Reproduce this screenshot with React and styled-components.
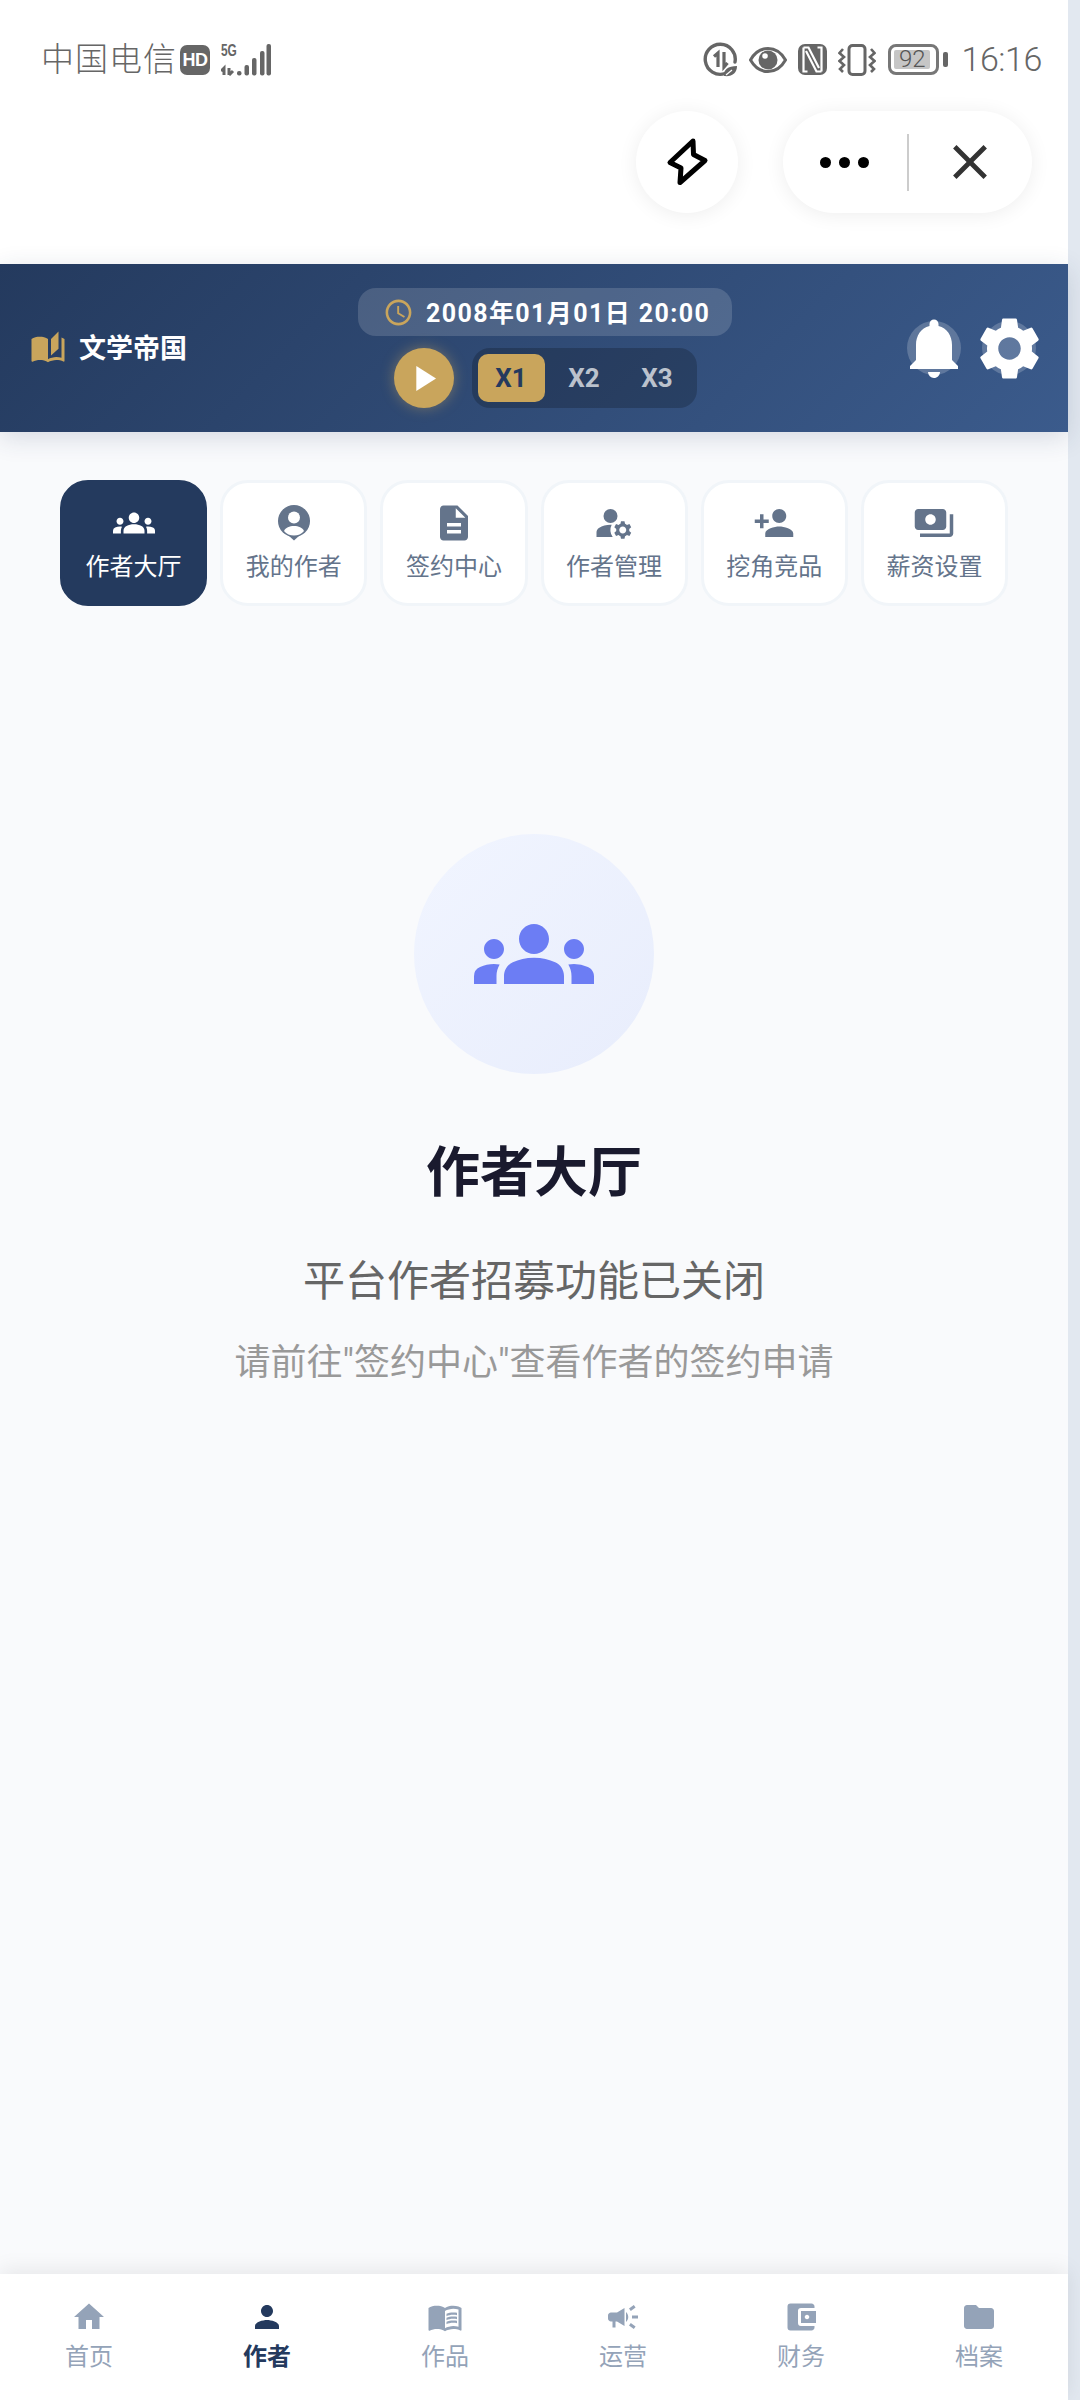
import React from "react";
import styled, { createGlobalStyle } from "styled-components";
import {
  MdGroups,
  MdDescription,
  MdManageAccounts,
  MdPersonAdd,
  MdPayments,
  MdHome,
  MdPerson,
  MdMenuBook,
  MdCampaign,
  MdAccountBalanceWallet,
  MdFolder,
  MdAutoStories,
  MdAccessTime,
  MdNotifications,
  MdSettings,
  MdPlayArrow,
  MdClose,
} from "react-icons/md";

const GlobalStyle = createGlobalStyle`
  html, body {
    margin: 0;
    padding: 0;
    background: #fff;
    overflow: hidden;
  }
  * {
    box-sizing: border-box;
  }
`;

const FONT = `Roboto, "Noto Sans CJK SC", sans-serif`;

const Screen = styled.div`
  display: flex;
  width: 1080px;
  height: 2400px;
  font-family: ${FONT};
`;

const Page = styled.div`
  flex: 1;
  display: flex;
  flex-direction: column;
  min-width: 0;
  background: #f9fafc;
`;

const ScrollGutter = styled.div`
  width: 12px;
  background: #e2e8f0;
`;

const TopArea = styled.div`
  background: #fff;
  height: 264px;
`;

const StatusBar = styled.div`
  height: 111px;
  padding: 42px 26px 0 41px;
  display: flex;
  justify-content: space-between;
  align-items: flex-start;
  color: #666;
`;

const StatusGroup = styled.div`
  display: flex;
  align-items: center;
  height: 35px;
`;

const Carrier = styled.span`
  font-size: 33px;
  font-weight: 300;
  line-height: 35px;
  letter-spacing: 1px;
  color: #666;
`;

const HdBadge = styled.span`
  width: 30px;
  height: 30px;
  margin-left: 3px;
  border-radius: 7px;
  background: #666;
  color: #fff;
  font: 700 18px/30px "Liberation Sans", sans-serif;
  text-align: center;
  letter-spacing: -0.5px;
`;

const SignalWrap = styled.div`
  position: relative;
  width: 50px;
  height: 32px;
  margin-left: 11px;
`;

const FiveG = styled.span`
  position: absolute;
  left: 0;
  top: -2px;
  font: 700 17px/17px "Liberation Sans", sans-serif;
  color: #666;
  transform: scaleX(0.7);
  transform-origin: left center;
`;

const StatusIcon = styled.svg`
  display: block;
  flex: none;
  margin-left: ${(p) => p.$gap || 0}px;
`;

const Battery = styled.div`
  position: relative;
  width: 51px;
  height: 31px;
  margin-left: 12px;
  border: 3px solid #777;
  border-radius: 8px;
  padding: 3px;
  &::after {
    content: "";
    position: absolute;
    right: -12px;
    top: 5px;
    width: 5px;
    height: 15px;
    border-radius: 2px;
    background: #666;
  }
`;

const BatteryLevel = styled.div`
  height: 100%;
  width: 92%;
  border-radius: 2px;
  background: #c6c6c6;
  color: #555;
  font-size: 24px;
  font-weight: 300;
  line-height: 19px;
  text-align: center;
`;

const Clock = styled.span`
  margin-left: 22px;
  font-size: 34px;
  font-weight: 300;
  line-height: 35px;
  letter-spacing: -0.4px;
  color: #666;
`;

const CapsuleRow = styled.div`
  height: 102px;
  padding-right: 36px;
  display: flex;
  justify-content: flex-end;
  gap: 45px;
`;

const FlashButton = styled.div`
  width: 102px;
  height: 102px;
  border-radius: 50%;
  background: #fff;
  box-shadow: 0 2px 20px rgba(0, 0, 0, 0.07);
  display: flex;
  align-items: center;
  justify-content: center;
`;

const Capsule = styled.div`
  width: 249px;
  height: 102px;
  border-radius: 51px;
  background: #fff;
  box-shadow: 0 2px 20px rgba(0, 0, 0, 0.07);
  display: flex;
  align-items: center;
`;

const CapsuleSide = styled.div`
  flex: 1;
  display: flex;
  align-items: center;
  justify-content: center;
  gap: 8px;
  color: #333;
`;

const Dot = styled.span`
  width: 11px;
  height: 11px;
  border-radius: 50%;
  background: #000;
`;

const CapsuleDivider = styled.div`
  width: 2px;
  height: 57px;
  background: #ccc;
`;

const Header = styled.header`
  position: relative;
  z-index: 1;
  height: 168px;
  padding: 0 29px 0 30px;
  display: flex;
  align-items: center;
  justify-content: space-between;
  background: linear-gradient(135deg, #243a5e 0%, #3b5b8c 100%);
  box-shadow: 0 6px 24px rgba(36, 58, 94, 0.16);
`;

const Brand = styled.div`
  display: flex;
  align-items: center;
  gap: 13px;
  color: #c9a55c;
`;

const BrandName = styled.span`
  padding-bottom: 3px;
  font-size: 27px;
  font-weight: 700;
  color: #fff;
`;

const GameControls = styled.div`
  margin-right: 4px;
  display: flex;
  flex-direction: column;
  align-items: center;
  gap: 12px;
`;

const TimePill = styled.div`
  width: 374px;
  height: 48px;
  padding-left: 25px;
  border-radius: 18px;
  background: rgba(255, 255, 255, 0.15);
  display: flex;
  align-items: center;
  gap: 12px;
  color: #c9a55c;
`;

const TimeText = styled.span`
  padding-bottom: 2px;
  font-size: 25px;
  font-weight: 700;
  letter-spacing: 1.4px;
  color: #fff;
`;

const SpeedRow = styled.div`
  display: flex;
  align-items: center;
  gap: 18px;
`;

const PlayButton = styled.div`
  width: 60px;
  height: 60px;
  border-radius: 50%;
  background: #c9a55c;
  box-shadow: 0 0 14px rgba(201, 165, 92, 0.45);
  display: flex;
  align-items: center;
  justify-content: center;
  color: #fff;
`;

const SpeedGroup = styled.div`
  height: 60px;
  padding: 6px;
  border-radius: 18px;
  background: rgba(0, 0, 0, 0.2);
  display: flex;
  gap: 6px;
`;

const SpeedButton = styled.div`
  width: 67px;
  height: 48px;
  border-radius: 10px;
  background: ${(p) => (p.$active ? "#c9a55c" : "transparent")};
  color: ${(p) => (p.$active ? "#243a5e" : "rgba(255, 255, 255, 0.7)")};
  font-size: 26px;
  font-weight: 700;
  line-height: 48px;
  text-align: center;
`;

const HeaderActions = styled.div`
  display: flex;
  align-items: center;
  gap: 18px;
  color: #fff;
`;

const RoundAction = styled.div`
  position: relative;
  width: ${(p) => p.$size}px;
  height: 54px;
  display: flex;
  align-items: center;
  justify-content: center;
  &::before {
    content: "";
    position: absolute;
    left: 50%;
    top: 0;
    width: 54px;
    height: 54px;
    margin-left: -27px;
    border-radius: 50%;
    background: rgba(255, 255, 255, 0.2);
  }
  svg {
    position: relative;
    flex: none;
  }
`;

const TabRow = styled.nav`
  padding: 48px 60px 0;
  display: grid;
  grid-template-columns: repeat(6, 1fr);
  gap: 13px;
`;

const Tab = styled.div`
  height: 126px;
  border: 3px solid ${(p) => (p.$active ? "#243a5e" : "#f1f5f9")};
  border-radius: 28px;
  background: ${(p) => (p.$active ? "#243a5e" : "#fff")};
  color: ${(p) => (p.$active ? "#fff" : "#64748b")};
  display: flex;
  flex-direction: column;
  align-items: center;
  justify-content: center;
  gap: 6px;
`;

const TabLabel = styled.span`
  font-size: 24px;
  line-height: 34px;
  white-space: nowrap;
`;

const EmptyState = styled.main`
  flex: 1;
  padding-top: 228px;
  display: flex;
  flex-direction: column;
  align-items: center;
`;

const EmptyCircle = styled.div`
  width: 240px;
  height: 240px;
  border-radius: 50%;
  background: linear-gradient(135deg, #f1f5ff 0%, #e8edfc 100%);
  display: flex;
  align-items: center;
  justify-content: center;
  color: #6c7df4;
`;

const EmptyTitle = styled.h2`
  margin: 65px 0 0;
  font-size: 54px;
  font-weight: 700;
  line-height: 70px;
  color: #1a1a2e;
`;

const EmptyText = styled.p`
  margin: 46px 0 0;
  font-size: 42px;
  font-weight: 400;
  line-height: 54px;
  color: #666;
`;

const EmptyHint = styled.p`
  margin: 30px 0 0;
  font-size: 36px;
  line-height: 48px;
  color: #999;
`;

const BottomNav = styled.nav`
  position: relative;
  height: 126px;
  background: #fff;
  box-shadow: 0 -4px 20px rgba(0, 0, 0, 0.08);
  display: grid;
  grid-template-columns: repeat(6, 1fr);
`;

const NavItem = styled.div`
  padding-top: 25px;
  display: flex;
  flex-direction: column;
  align-items: center;
  gap: 5px;
  color: ${(p) => (p.$active ? "#243a5e" : "#94a3b8")};
`;

const NavLabel = styled.span`
  font-size: 24px;
  line-height: 34px;
  font-weight: ${(p) => (p.$active ? 700 : 400)};
`;

function SignalBars() {
  return (
    <svg width="50" height="32" viewBox="0 0 50 32" style={{ display: "block" }}>
      <path
        d="M3 31v-7l-3 3M8 24v7M8 31l4-4M8 24v3"
        stroke="#666"
        strokeWidth="3"
        fill="none"
      />
      <g fill="#666">
        <rect x="16" y="27" width="4.500" height="4.500" rx="2" />
        <rect x="23.500" y="21" width="4.500" height="10.500" rx="2" />
        <rect x="31" y="14" width="4.500" height="17.500" rx="2" />
        <rect x="39" y="7" width="4.500" height="24.500" rx="2" />
        <rect x="45.500" y="0" width="4.500" height="31.500" rx="2" />
      </g>
    </svg>
  );
}

function DataSaverIcon() {
  return (
    <StatusIcon width="35" height="35" viewBox="0 0 35 35" fill="none">
      <path
        d="M22 31.500A15 15 0 1 1 32 20"
        stroke="#666"
        strokeWidth="3.400"
        strokeLinecap="round"
      />
      <path d="M15 25V11l-4 3.500" stroke="#666" strokeWidth="3.200" />
      <path d="M21 10v15l3.500-4" stroke="#666" strokeWidth="3.200" />
      <path d="M21 34c-1-6 4-10 13-10 0 7-5 11-13 10z" fill="#666" />
      <path d="M23 33l6-5" stroke="#fff" strokeWidth="1.200" />
    </StatusIcon>
  );
}

function EyeIcon() {
  return (
    <StatusIcon $gap={11} width="38" height="26" viewBox="0 0 38 26" fill="none">
      <path d="M1.500 13C6 5 12 1.500 19 1.500S32 5 36.500 13C32 21 26 24.500 19 24.500S6 21 1.500 13z" stroke="#666" strokeWidth="3" />
      <circle cx="19" cy="13" r="9.500" fill="#666" />
      <circle cx="16" cy="9" r="2.800" fill="#fff" />
    </StatusIcon>
  );
}

function NfcIcon() {
  return (
    <StatusIcon $gap={11} width="29" height="31" viewBox="0 0 29 31" fill="none">
      <rect width="29" height="31" rx="7" fill="#666" />
      <path d="M5.500 3.500h5L21 24M23.500 27.500h-5L8 7" stroke="#fff" strokeWidth="2.200" />
      <path d="M5.500 3.500v24h4M23.500 27.500v-24h-4" stroke="#fff" strokeWidth="2.200" />
    </StatusIcon>
  );
}

function VibrateIcon() {
  return (
    <StatusIcon $gap={11} width="38" height="32" viewBox="0 0 38 32" fill="none">
      <rect x="11" y="1.500" width="16" height="29" rx="3.500" stroke="#666" strokeWidth="3" />
      <path d="M5 5L1.500 9 6 13l-4.500 4L6 21l-4 4 3 3" stroke="#666" strokeWidth="2.600" />
      <path d="M33 5l3.500 4L32 13l4.500 4L32 21l4 4-3 3" stroke="#666" strokeWidth="2.600" />
    </StatusIcon>
  );
}

function PersonPinIcon() {
  return (
    <svg width="42" height="42" viewBox="-5 -3 42 42">
      <circle cx="16" cy="16" r="16" fill="currentColor" />
      <path d="M10 30h12l-6 5.500z" fill="currentColor" />
      <circle cx="16" cy="12.500" r="6" fill="#fff" />
      <path d="M6 26c1.500-3.500 5.500-5 10-5s8.500 1.500 10 5c-2.500 3-6 4.500-10 4.500S8.500 29 6 26z" fill="#fff" />
    </svg>
  );
}

function FlashIcon() {
  return (
    <svg width="47" height="52" viewBox="0 0 47 52" fill="none">
      <path
        d="M29 5L6 26.500L17 32L16 46.500L41 24.500L29.500 18.500Z"
        stroke="#000"
        strokeWidth="5"
        strokeLinejoin="round"
      />
    </svg>
  );
}

const tabs = [
  { label: "作者大厅", icon: <MdGroups size={42} />, active: true },
  { label: "我的作者", icon: <PersonPinIcon /> },
  { label: "签约中心", icon: <MdDescription size={42} /> },
  { label: "作者管理", icon: <MdManageAccounts size={42} /> },
  { label: "挖角竞品", icon: <MdPersonAdd size={42} /> },
  { label: "薪资设置", icon: <MdPayments size={42} /> },
];

const navItems = [
  { label: "首页", icon: MdHome },
  { label: "作者", icon: MdPerson, active: true },
  { label: "作品", icon: MdMenuBook },
  { label: "运营", icon: MdCampaign },
  { label: "财务", icon: MdAccountBalanceWallet },
  { label: "档案", icon: MdFolder },
];

export default function App() {
  return (
    <Screen>
      <GlobalStyle />
      <Page>
        <TopArea>
          <StatusBar>
            <StatusGroup>
              <Carrier>中国电信</Carrier>
              <HdBadge>HD</HdBadge>
              <SignalWrap>
                <FiveG>5G</FiveG>
                <SignalBars />
              </SignalWrap>
            </StatusGroup>
            <StatusGroup>
              <DataSaverIcon />
              <EyeIcon />
              <NfcIcon />
              <VibrateIcon />
              <Battery>
                <BatteryLevel>92</BatteryLevel>
              </Battery>
              <Clock>16:16</Clock>
            </StatusGroup>
          </StatusBar>
          <CapsuleRow>
            <FlashButton>
              <FlashIcon />
            </FlashButton>
            <Capsule>
              <CapsuleSide>
                <Dot />
                <Dot />
                <Dot />
              </CapsuleSide>
              <CapsuleDivider />
              <CapsuleSide>
                <MdClose size={58} />
              </CapsuleSide>
            </Capsule>
          </CapsuleRow>
        </TopArea>

        <Header>
          <Brand>
            <MdAutoStories size={36} />
            <BrandName>文学帝国</BrandName>
          </Brand>
          <GameControls>
            <TimePill>
              <MdAccessTime size={31} />
              <TimeText>2008年01月01日 20:00</TimeText>
            </TimePill>
            <SpeedRow>
              <PlayButton>
                <MdPlayArrow size={43} />
              </PlayButton>
              <SpeedGroup>
                <SpeedButton $active>X1</SpeedButton>
                <SpeedButton>X2</SpeedButton>
                <SpeedButton>X3</SpeedButton>
              </SpeedGroup>
            </SpeedRow>
          </GameControls>
          <HeaderActions>
            <RoundAction $size={54}>
              <MdNotifications size={72} />
            </RoundAction>
            <RoundAction $size={60}>
              <MdSettings size={75} />
            </RoundAction>
          </HeaderActions>
        </Header>

        <TabRow>
          {tabs.map((tab) => (
            <Tab key={tab.label} $active={tab.active}>
              {tab.icon}
              <TabLabel>{tab.label}</TabLabel>
            </Tab>
          ))}
        </TabRow>

        <EmptyState>
          <EmptyCircle>
            <MdGroups size={120} />
          </EmptyCircle>
          <EmptyTitle>作者大厅</EmptyTitle>
          <EmptyText>平台作者招募功能已关闭</EmptyText>
          <EmptyHint>请前往"签约中心"查看作者的签约申请</EmptyHint>
        </EmptyState>

        <BottomNav>
          {navItems.map(({ label, icon: Icon, active }) => (
            <NavItem key={label} $active={active}>
              <Icon size={36} />
              <NavLabel $active={active}>{label}</NavLabel>
            </NavItem>
          ))}
        </BottomNav>
      </Page>
      <ScrollGutter />
    </Screen>
  );
}
